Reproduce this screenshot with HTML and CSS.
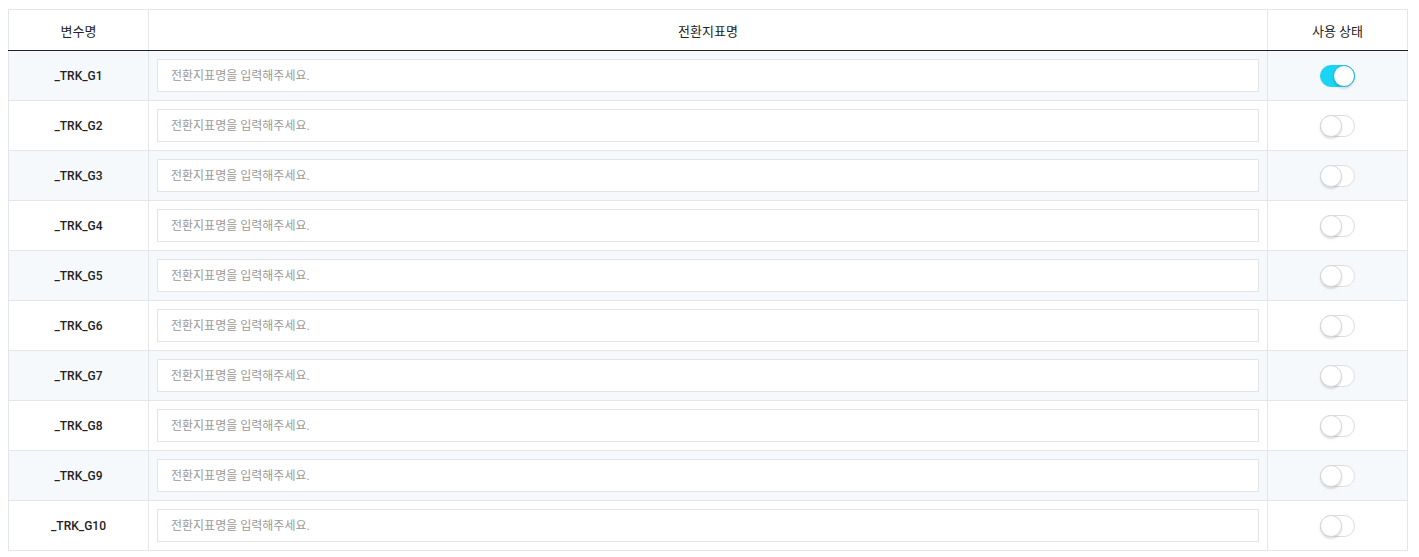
FILE: index.html
```html
<!DOCTYPE html>
<html lang="ko">
<head>
<meta charset="utf-8">
<title>전환지표명</title>
<link rel="stylesheet" href="styles.css">
</head>
<body>
<table class="grid">
  <colgroup>
    <col class="c-name">
    <col class="c-label">
    <col class="c-state">
  </colgroup>
  <thead>
    <tr>
      <th>변수명</th>
      <th>전환지표명</th>
      <th>사용 상태</th>
    </tr>
  </thead>
  <tbody>
    <tr class="alt"><td class="var">_TRK_G1</td><td><input class="field" type="text" placeholder="전환지표명을 입력해주세요."></td><td><span class="toggle on"><span class="knob"></span></span></td></tr>
    <tr><td class="var">_TRK_G2</td><td><input class="field" type="text" placeholder="전환지표명을 입력해주세요."></td><td><span class="toggle"><span class="knob"></span></span></td></tr>
    <tr class="alt"><td class="var">_TRK_G3</td><td><input class="field" type="text" placeholder="전환지표명을 입력해주세요."></td><td><span class="toggle"><span class="knob"></span></span></td></tr>
    <tr><td class="var">_TRK_G4</td><td><input class="field" type="text" placeholder="전환지표명을 입력해주세요."></td><td><span class="toggle"><span class="knob"></span></span></td></tr>
    <tr class="alt"><td class="var">_TRK_G5</td><td><input class="field" type="text" placeholder="전환지표명을 입력해주세요."></td><td><span class="toggle"><span class="knob"></span></span></td></tr>
    <tr><td class="var">_TRK_G6</td><td><input class="field" type="text" placeholder="전환지표명을 입력해주세요."></td><td><span class="toggle"><span class="knob"></span></span></td></tr>
    <tr class="alt"><td class="var">_TRK_G7</td><td><input class="field" type="text" placeholder="전환지표명을 입력해주세요."></td><td><span class="toggle"><span class="knob"></span></span></td></tr>
    <tr><td class="var">_TRK_G8</td><td><input class="field" type="text" placeholder="전환지표명을 입력해주세요."></td><td><span class="toggle"><span class="knob"></span></span></td></tr>
    <tr class="alt"><td class="var">_TRK_G9</td><td><input class="field" type="text" placeholder="전환지표명을 입력해주세요."></td><td><span class="toggle"><span class="knob"></span></span></td></tr>
    <tr><td class="var">_TRK_G10</td><td><input class="field" type="text" placeholder="전환지표명을 입력해주세요."></td><td><span class="toggle"><span class="knob"></span></span></td></tr>
  </tbody>
</table>
</body>
</html>
```
FILE: styles.css
```css
html, body {
  margin: 0;
  padding: 0;
  background: #ffffff;
}
body {
  padding: 9px 11px 0 8px;
  font-family: Roboto, "Noto Sans CJK KR", sans-serif;
  color: #222;
}
.grid {
  width: 1400px;
  border-collapse: collapse;
  table-layout: fixed;
  border: 1px solid #e3e6ea;
}
.c-name { width: 140px; }
.c-state { width: 140px; }
.grid th {
  height: 40px;
  padding: 0;
  font-weight: 400;
  font-size: 13px;
  color: #222;
  text-align: center;
  border-left: 1px solid #e3e6ea;
  border-right: 1px solid #e3e6ea;
  border-bottom: 1px solid #222;
  background: #fff;
}
.grid td {
  height: 49px;
  padding: 0 8px;
  border: 1px solid #e3e6ea;
  text-align: center;
  vertical-align: middle;
  background: #fff;
}
.grid tr.alt td {
  background: #f5f9fc;
}
.grid td.var {
  font-size: 12px;
  font-weight: 500;
  color: #222;
}
.field {
  display: block;
  box-sizing: border-box;
  width: 100%;
  height: 33px;
  margin: 0;
  padding: 0 13px;
  border: 1px solid #e2e4e7;
  background: #fff;
  font-family: Roboto, "Noto Sans CJK KR", sans-serif;
  font-size: 12px;
  color: #222;
  outline: none;
}
.field::placeholder {
  color: #9a9a9a;
}
.toggle {
  display: inline-block;
  box-sizing: border-box;
  position: relative;
  width: 35px;
  height: 22px;
  border-radius: 11px;
  border: 1px solid #dedede;
  background: #fff;
  vertical-align: middle;
}
.toggle .knob {
  position: absolute;
  top: -1px;
  left: -1px;
  width: 22px;
  height: 22px;
  box-sizing: border-box;
  border-radius: 50%;
  background: #fff;
  border: 1px solid #d6d6d6;
  box-shadow: 0 2px 2px rgba(0,0,0,0.12);
}
.toggle.on {
  background: #1ad3f5;
  border-color: #1ad3f5;
}
.toggle.on .knob {
  left: auto;
  right: -1px;
  border-color: #1bb8d4;
}
```
